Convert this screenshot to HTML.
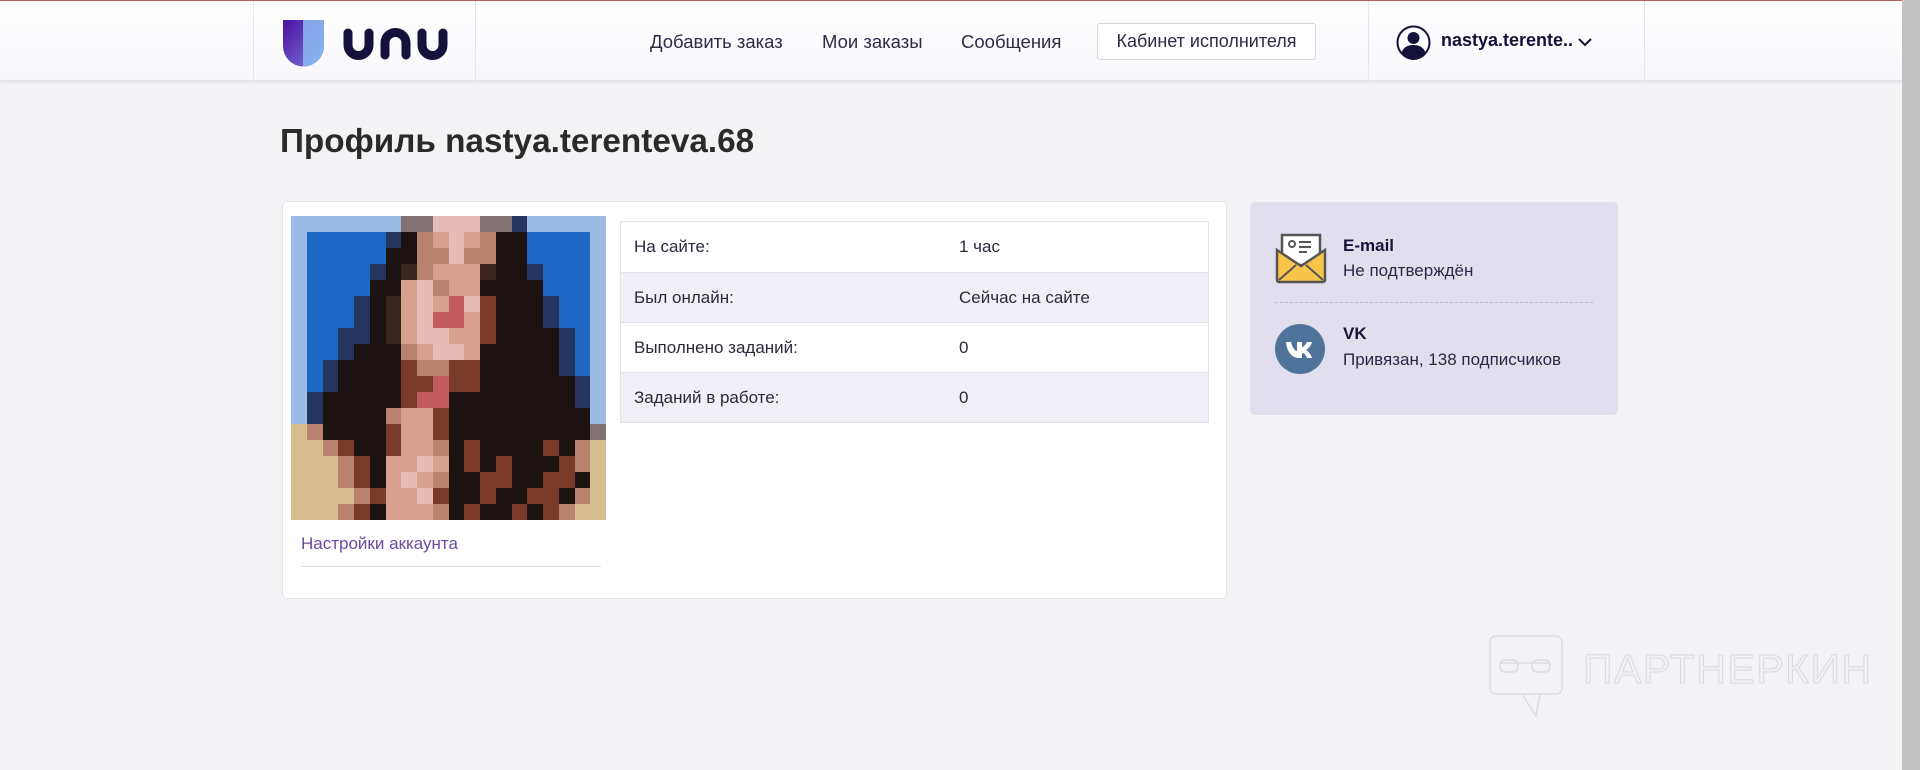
<!DOCTYPE html>
<html><head><meta charset="utf-8"><style>
*{box-sizing:border-box;margin:0;padding:0}
body{width:1920px;height:770px;overflow:hidden;background:#f3f3f6;font-family:"Liberation Sans","DejaVu Sans",sans-serif;color:#2a2a3a;position:relative}
.abs{position:absolute}
#hdr{left:0;top:0;width:1902px;height:81px;background:linear-gradient(#fff,#f8f7fc);border-top:1px solid #b86060;box-shadow:0 1px 3px rgba(0,0,0,.08);border-bottom:1px solid #e3e1ea}
.vl{position:absolute;top:0;height:80px;width:1px;background:#e6e4ec}
.nav{position:absolute;top:30px;font-size:18.5px;color:#2d2b45}
#btn{left:1097px;top:22px;width:219px;height:37px;border:1px solid #d6d5de;border-radius:3px;background:#fff;font-size:18px;color:#2d2b45;text-align:center;line-height:35px}
#sb{left:1902px;top:0;width:18px;height:770px;background:#c1c1c1}
h1{position:absolute;left:280px;top:123px;font-size:33.3px;font-weight:bold;color:#2a2a2a}
#card{left:282px;top:201px;width:945px;height:398px;background:#fff;border:1px solid #e2e2ea;border-radius:5px}
#photo{left:291px;top:216px;width:315px;height:304px;display:grid;grid-template-columns:repeat(20,1fr);grid-template-rows:repeat(19,1fr);background:#1c66c8}
#tbl{left:620px;top:221px;width:589px;border:1px solid #e2e2ea}
.row{height:50px;font-size:17px;line-height:50px;position:relative;padding-left:13px;border-top:1px solid #e2e2ea}
.row:first-child{border-top:none}
.row:nth-child(2n){background:#f1f0f6}
.row span{position:absolute;left:338px}
#right{left:1250px;top:202px;width:368px;height:213px;background:#e1dfee;border-radius:5px}
.t1{position:absolute;font-size:17px;font-weight:bold;color:#16143a}
.t2{position:absolute;font-size:17px;color:#2a2845}
</style></head><body>
<div id="hdr" class="abs">
<div class="vl" style="left:253px"></div><div class="vl" style="left:475px"></div><div class="vl" style="left:1368px"></div><div class="vl" style="left:1644px"></div>
<svg class="abs" style="left:282px;top:18px" width="170" height="48" viewBox="0 0 170 48">
<defs><linearGradient id="g1" x1="0" y1="0" x2="1" y2="1"><stop offset="0" stop-color="#4a10a0"/><stop offset="1" stop-color="#7a7ad8"/></linearGradient></defs>
<path d="M1 1h41v26a20.5 20.5 0 0 1-41 0z" fill="url(#g1)"/>
<path d="M21 1h21v26a20.5 20.5 0 0 1-21 20.5z" fill="#8fc2f6" opacity=".8"/>
<path d="M66 14v12a10.5 10.5 0 0 0 21 0v-12" fill="none" stroke="#14123a" stroke-width="9" stroke-linecap="round"/>
<path d="M103 36v-12a10.5 10.5 0 0 1 21 0v12" fill="none" stroke="#14123a" stroke-width="9" stroke-linecap="round"/>
<path d="M140 14v12a10.5 10.5 0 0 0 21 0v-12" fill="none" stroke="#14123a" stroke-width="9" stroke-linecap="round"/>
</svg>
<div class="nav" style="left:650px">Добавить заказ</div>
<div class="nav" style="left:822px">Мои заказы</div>
<div class="nav" style="left:961px">Сообщения</div>
<div id="btn" class="abs">Кабинет исполнителя</div>
<svg class="abs" style="left:1396px;top:24px" width="35" height="35" viewBox="0 0 35 35"><circle cx="17.5" cy="17.5" r="16" fill="#fff" stroke="#14123a" stroke-width="2"/><circle cx="17.5" cy="13" r="6" fill="#14123a"/><path d="M5 29c2-7 7-9 12.5-9s10.5 2 12.5 9a16 16 0 0 1-25 0z" fill="#14123a"/></svg>
<div class="abs" style="left:1441px;top:29px;font-size:18px;font-weight:bold;color:#14123a">nastya.terente..</div>
<svg class="abs" style="left:1577px;top:35px" width="16" height="12" viewBox="0 0 16 12"><path d="M2 3l6 6 6-6" fill="none" stroke="#14123a" stroke-width="2"/></svg>
</div>
<div id="sb" class="abs"></div>
<h1>Профиль nastya.terenteva.68</h1>
<div id="card" class="abs"></div>
<div id="photo" class="abs"></div>
<div class="abs" style="left:301px;top:534px;font-size:17px;color:#6a4aa0">Настройки аккаунта</div>
<div class="abs" style="left:301px;top:566px;width:300px;height:1px;background:#e0dfe6"></div>
<div id="tbl" class="abs">
<div class="row">На сайте:<span>1 час</span></div>
<div class="row">Был онлайн:<span>Сейчас на сайте</span></div>
<div class="row">Выполнено заданий:<span>0</span></div>
<div class="row">Заданий в работе:<span>0</span></div>
</div>
<div id="right" class="abs">
<svg class="abs" style="left:25px;top:31px" width="52" height="51" viewBox="0 0 52 51"><rect x="7" y="2" width="38" height="30" fill="#fff" stroke="#555" stroke-width="2.5"/><circle cx="17" cy="11" r="3" fill="none" stroke="#555" stroke-width="2"/><path d="M24 9h12M24 14h12M24 19h8" stroke="#555" stroke-width="2"/><path d="M2 17l24 16 24-16v30a2 2 0 0 1-2 2H4a2 2 0 0 1-2-2z" fill="#f7c54a" stroke="#555" stroke-width="2.5"/><path d="M4 47l17-15M48 47l-17-15" stroke="#555" stroke-width="2"/></svg>
<div class="t1" style="left:93px;top:34px">E-mail</div>
<div class="t2" style="left:93px;top:59px">Не подтверждён</div>
<div class="abs" style="left:25px;top:100px;width:318px;border-top:1px dashed #b8b6c8"></div>
<svg class="abs" style="left:25px;top:122px" width="50" height="50" viewBox="0 0 50 50"><circle cx="25" cy="25" r="25" fill="#50739c"/><path d="M11 18h5c1 5 4 9 6 9v-9h5v5c2 0 4-3 5-5h5c-1 4-4 7-6 8 2 1 5 4 6 8h-5c-1-3-3-5-5-5v5h-3c-7 0-12-6-13-16z" fill="#fff"/></svg>
<div class="t1" style="left:93px;top:122px">VK</div>
<div class="t2" style="left:93px;top:148px">Привязан, 138 подписчиков</div>
</div>
<svg class="abs" style="left:1488px;top:634px" width="400" height="84" viewBox="0 0 400 84"><g fill="none" stroke="#dcdce2" stroke-width="1.5"><rect x="2" y="2" width="72" height="58" rx="6"/><path d="M34 60l14 22 4-22"/><rect x="12" y="26" width="18" height="12" rx="5"/><rect x="44" y="26" width="18" height="12" rx="5"/><path d="M12 29h50"/></g><text x="95" y="49" font-family="Liberation Sans,sans-serif" font-size="41" fill="none" stroke="#d8d8de" stroke-width="1" letter-spacing="1.5">ПАРТНЕРКИН</text></svg>
<script>
var m=["LLLLLLLGGPPPGGNLLLLL","LBBBBBNDTSPSTDDBBBBL","LBBBBBDDTTPTTDDBBBBL","LBBBBNDHTSSSHDDNBBBL","LBBBBDDSPTSSDDDDBBBL","LBBBNDHSPSRPODDDNBBL","LBBBNDHSPRRSODDDNBBL","LBBNNDHSPPSSODDDDNBL","LBBNDDDTSPPSDDDDDNBL","LBNDDDDOTTOODDDDDNBL","LBNDDDDOOROODDDDDDNL","LNDDDDDORRDDDDDDDDNL","LNDDDDTSSODDDDDDDDDL","WTDDDDOSSODDDDDDDDDG","WWTODDOSSTDODDDDODTW","WWWTODSSPSDODODDDOTW","WWWTODSPSTDDOODDOODW","WWWWTOSSPODDODDOODTW","WWWTODSSSTDODDODOTWW"];
var c={L:"#9cbce6",B:"#1f68c6",G:"#807272",P:"#e6bcb8",N:"#24355e",D:"#1c1212",T:"#b8826e",S:"#d8a08e",H:"#3a2420",R:"#c05a5c",O:"#7a3a2a",W:"#d6bc8e"};
var p=document.getElementById("photo"),h="";
m.forEach(function(r){for(var i=0;i<20;i++)h+='<div style="background:'+c[r[i]]+'"></div>';});
p.innerHTML=h;
</script>
</body></html>
